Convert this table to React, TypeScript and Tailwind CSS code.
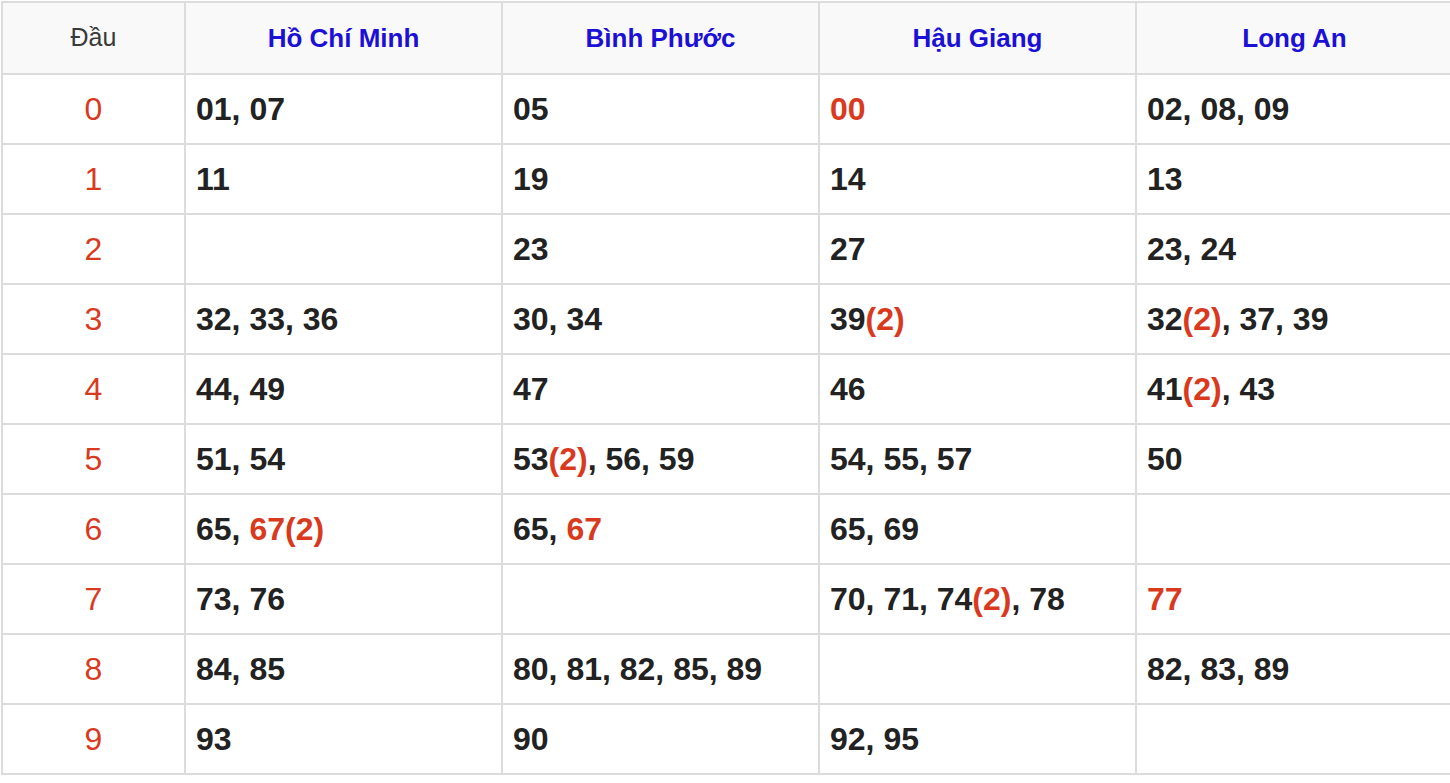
import React from "react";

type Part = { t: string; red?: boolean };
type Cell = Part[];

const provinces = ["Hồ Chí Minh", "Bình Phước", "Hậu Giang", "Long An"];

// helpers: "n" plain, "!n" red number, "n(2)" count in red
function parse(s: string): Cell {
  if (!s) return [];
  const parts: Part[] = [];
  s.split(", ").forEach((item, i) => {
    if (i > 0) parts.push({ t: ", " });
    const red = item.startsWith("!");
    const v = red ? item.slice(1) : item;
    const m = v.match(/^(\d+)(\(\d+\))?$/);
    if (!m) { parts.push({ t: v, red }); return; }
    parts.push({ t: m[1], red });
    if (m[2]) parts.push({ t: m[2], red: true });
  });
  return parts;
}

const rows: string[][] = [
  ["01, 07", "05", "!00", "02, 08, 09"],
  ["11", "19", "14", "13"],
  ["", "23", "27", "23, 24"],
  ["32, 33, 36", "30, 34", "39(2)", "32(2), 37, 39"],
  ["44, 49", "47", "46", "41(2), 43"],
  ["51, 54", "53(2), 56, 59", "54, 55, 57", "50"],
  ["65, !67(2)", "65, !67", "65, 69", ""],
  ["73, 76", "", "70, 71, 74(2), 78", "!77"],
  ["84, 85", "80, 81, 82, 85, 89", "", "82, 83, 89"],
  ["93", "90", "92, 95", ""],
];

export default function App() {
  return (
    <div className="w-full overflow-hidden bg-white pt-px pl-px font-['Liberation_Sans',Arial,sans-serif]">
      <div className="grid w-[1453px] grid-cols-[181px_315px_315px_315px_315px] gap-[2px] border-2 border-[#dcdcdc] bg-[#dcdcdc]">
        <div className="flex h-[70px] items-center justify-center bg-[#f9f9f9] text-[25px] text-[#3a3a3a]">Đầu</div>
        {provinces.map((p) => (
          <div key={p} className="flex h-[70px] items-center justify-center bg-[#f9f9f9] text-[26px] font-bold text-[#1c10d6]">
            {p}
          </div>
        ))}
        {rows.map((r, i) => (
          <React.Fragment key={i}>
            <div className="flex h-[68px] items-center justify-center bg-white text-[32px] text-[#d93a1e]">{i}</div>
            {r.map((c, j) => (
              <div key={j} className="flex h-[68px] items-center bg-white pl-[10px] text-[32px] font-bold text-[#222]">
                <span className="whitespace-pre">
                  {parse(c).map((p, k) => (
                    <span key={k} className={p.red ? "text-[#d93a1e]" : undefined}>
                      {p.t}
                    </span>
                  ))}
                </span>
              </div>
            ))}
          </React.Fragment>
        ))}
      </div>
    </div>
  );
}
